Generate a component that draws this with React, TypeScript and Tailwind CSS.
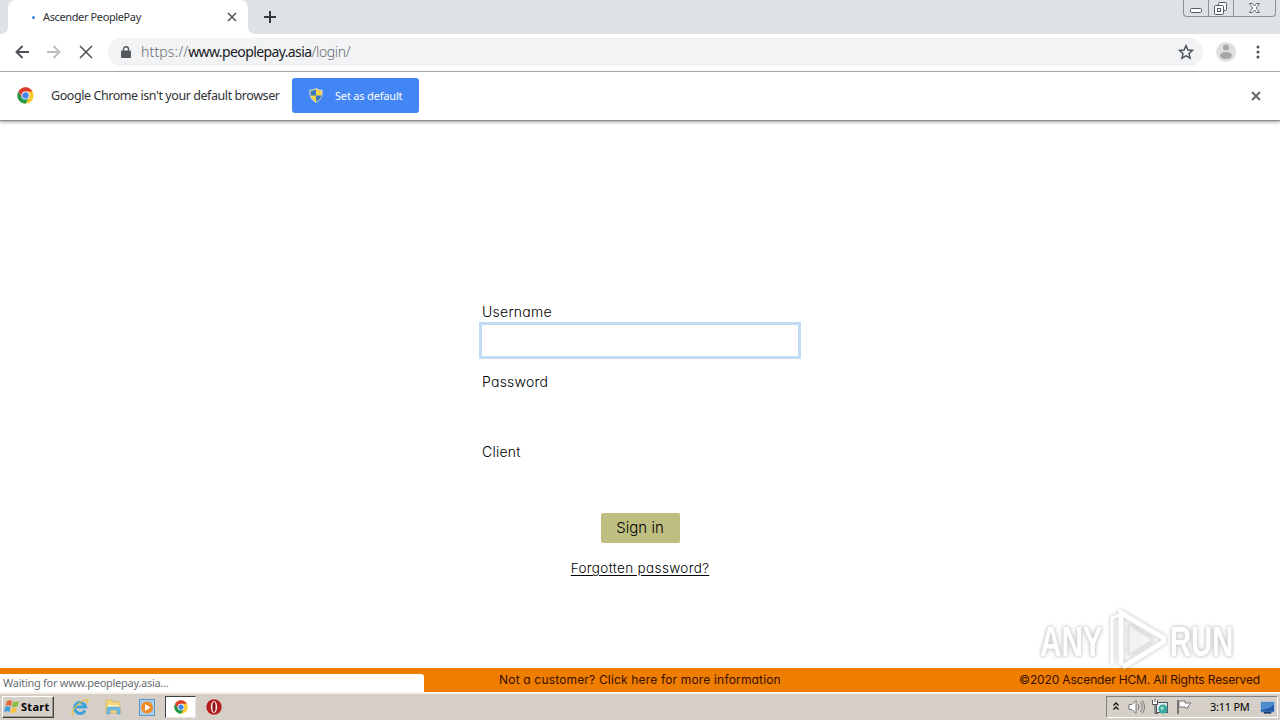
import React from "react";

const ui = "font-['Noto_Sans','Open_Sans',sans-serif]";
const geo = "font-['Inter',sans-serif] [font-feature-settings:'cv11']";

function ChromeLogo({ size }: { size: number }) {
  return (
    <svg width={size} height={size} viewBox="0 0 48 48" className="block shrink-0">
      <circle cx="24" cy="24" r="23" fill="#fbc92f" />
      <path d="M14 29.800 4.100 12.500A23 23 0 0 0 24 47L34 29.800Z" fill="#1f9b55" />
      <path d="M24 12.500H43.900A23 23 0 0 0 4.100 12.500L14 29.800 24 24Z" fill="#dc3b30" />
      <circle cx="24" cy="24" r="11.5" fill="#fff" />
      <circle cx="24" cy="24" r="9" fill="#4285e8" />
    </svg>
  );
}

function Cross({ size, color, width = 2 }: { size: number; color: string; width?: number }) {
  return (
    <svg width={size} height={size} viewBox={`0 0 ${size} ${size}`} className="block shrink-0">
      <path d={`M1 1L${size - 1} ${size - 1}M${size - 1} 1L1 ${size - 1}`} stroke={color} strokeWidth={width} fill="none" />
    </svg>
  );
}

function WindowButtons() {
  return (
    <div className="ml-auto mr-[4px] flex h-[17px] w-[93px] rounded-b-[4px] border border-t-0 border-[#8b9097]">
      <svg width="91" height="16" viewBox="0 0 91 16" fill="none" stroke="#555b65" className="block">
        <path d="M24.5 0V16M49.500 0V16" stroke="#8b9097" />
        <rect x="6.500" y="8.500" width="11" height="4" rx="1" fill="#fff" />
        <rect x="34.500" y="2.500" width="8" height="8" rx="1" fill="#fff" />
        <rect x="30.500" y="5.500" width="9" height="9" rx="1" fill="#fff" />
        <rect x="33.500" y="8.500" width="3" height="3" />
        <path d="M65.500 3.500h3l2 2.500 2-2.500h3l-3.200 4.500 3.200 4.500h-3l-2-2.500-2 2.500h-3l3.200-4.500z" fill="#fff" strokeWidth=".9" />
      </svg>
    </div>
  );
}

function TabStrip() {
  return (
    <div className="flex h-[34px] bg-[#dee1e6]">
      <svg width="8" height="34" className="block shrink-0"><path d="M0 34Q8 34 8 26V34Z" fill="#fff" /></svg>
      <div className="flex h-[34px] w-[240px] items-center rounded-t-[8px] bg-white pl-[24px] pr-[11px]">
        <span className="h-[3px] w-[3px] rounded-full bg-[#3b84df]" />
        <span className={`ml-[8px] whitespace-nowrap text-[11px] leading-[16px] tracking-[-0.38px] text-[#303236] ${ui}`}>Ascender PeoplePay</span>
        <span className="ml-auto"><Cross size={10} color="#55585c" width={1.6} /></span>
      </div>
      <svg width="8" height="34" className="block shrink-0"><path d="M8 34Q0 34 0 26V34Z" fill="#fff" /></svg>
      <svg width="12" height="12" viewBox="0 0 12 12" className="ml-[8px] mt-[11px] block"><path d="M6 0V12M0 6H12" stroke="#35383d" strokeWidth="2" /></svg>
      <WindowButtons />
    </div>
  );
}

function Toolbar() {
  return (
    <div className="flex h-[38px] items-center border-b border-[#b5b6b8] bg-white pb-px pl-[15px]">
      <svg width="14" height="14" viewBox="0 0 14 14" fill="none" stroke="#4c4f54" strokeWidth="1.9"><path d="M14 7H1.500M7.500 1 1.500 7l6 6" /></svg>
      <svg width="14" height="14" viewBox="0 0 14 14" fill="none" stroke="#bcbec1" strokeWidth="1.9" className="ml-[18px]"><path d="M0 7h12.500M6.500 1l6 6-6 6" /></svg>
      <span className="ml-[18px]"><Cross size={14} color="#505358" width={1.6} /></span>
      <div className="ml-[15px] flex h-[28px] w-[1095px] items-center rounded-full bg-[#f1f3f4] pl-[13px] pr-[10px]">
        <svg width="10" height="12" viewBox="0 0 10 12"><rect y="4.500" width="10" height="7.500" rx="1" fill="#55585d" /><path d="M2.500 5V3a2.500 2.200 0 0 1 5 0V5" fill="none" stroke="#55585d" strokeWidth="1.400" /></svg>
        <span className={`ml-[10px] whitespace-nowrap text-[14px] font-light leading-[20px] text-[#686c72] ${ui}`}>
          <span className="tracking-[0.15px]">https://</span><span className="font-normal tracking-[-0.6px] text-[#202124]">www.peoplepay.asia</span><span className="tracking-[-0.35px]">/login/</span>
        </span>
        <svg width="16" height="16" viewBox="0 0 16 16" className="ml-auto mr-[-1px]"><path d="M8 1.600 9.900 6l4.700.4L11 9.500l1.100 4.700L8 11.700l-4.100 2.500L5 9.500 1.400 6.400 6.100 6Z" fill="none" stroke="#4a4e55" strokeWidth="1.400" /></svg>
      </div>
      <svg width="20" height="20" viewBox="0 0 20 20" className="ml-[13px]"><circle cx="10" cy="10" r="10" fill="#dedfe0" /><circle cx="10" cy="5.500" r="3" fill="#a6a7a8" /><ellipse cx="10" cy="13.500" rx="6" ry="3.500" fill="#a6a7a8" /></svg>
      <svg width="4" height="14" viewBox="0 0 4 14" className="ml-[20px]" fill="#4e5156"><circle cx="2" cy="2" r="1.500" /><circle cx="2" cy="7" r="1.500" /><circle cx="2" cy="12" r="1.500" /></svg>
    </div>
  );
}

function Infobar() {
  return (
    <div className="flex h-[49px] items-center border-b border-[#8d8d8d] bg-white pb-px pl-[17px] pr-[19px] shadow-[0_1px_3px_rgba(0,0,0,0.4)]">
      <ChromeLogo size={17} />
      <span className={`ml-[17px] w-[241px] whitespace-nowrap text-[12.5px] leading-[18px] tracking-[-0.43px] text-[#303236] ${ui}`}>Google Chrome isn't your default browser</span>
      <button className={`flex h-[35px] w-[127px] items-center rounded-[3px] bg-[#4285f4] pl-[17px] text-[11px] leading-[16px] text-white ${ui}`}>
        <svg width="14" height="15" viewBox="0 0 14 15" className="shrink-0">
          <path d="M7 .5Q10 2.500 13.200 2.200Q14 11 7 14.500Q0 11 .8 2.200Q4 2.500 7 .5Z" fill="#f5d34e" stroke="#c7cfdc" />
          <path d="M7 1.500Q4 3 1.700 2.900L1.600 7.500H7Z M7 7.500H12.400Q11.500 11.500 7 13.600Z" fill="#347bc0" />
        </svg>
        <span className="ml-[12px] whitespace-nowrap tracking-[-0.18px]">Set as default</span>
      </button>
      <span className="ml-auto"><Cross size={10} color="#606368" width={2} /></span>
    </div>
  );
}

function Field({ label, focused = false }: { label: string; focused?: boolean }) {
  return (
    <label className="block h-[70px]">
      <span className="block h-[20px] pl-[3px] text-[14px] leading-[20px] tracking-[0.25px]">{label}</span>
      <input className={focused ? "block h-[37px] w-[322px] border-[3px] border-[#c3daf3] bg-white outline-none" : "block h-[37px] w-[322px] bg-transparent outline-none"} />
    </label>
  );
}

function Watermark() {
  return (
    <div className="absolute right-[38px] top-[608px] flex h-[66px] w-[202px] items-center opacity-90 drop-shadow-[0_0_2px_rgba(0,0,0,0.3)]">
      <span className="block w-[70px] whitespace-nowrap">
        <span className="inline-block origin-left scale-x-[.69] text-[43px] font-bold leading-[60px] text-white font-['Liberation_Sans',sans-serif] [text-shadow:0_0_2px_#ccc]">ANY</span>
      </span>
      <svg width="60" height="64" viewBox="0 0 60 64" fill="none" stroke="#fff" strokeWidth="5" className="-ml-[3px] mr-[3px] shrink-0">
        <path d="M5 55V9l8-3" strokeWidth="3" />
        <path d="M14 56V4L56 28.500Q58 32 55 34L16 58" />
        <path d="M22 16 46 31 22 46Z" fill="#f1f1f1" stroke="#e0e0e0" strokeWidth="1.500" />
      </svg>
      <span className="block w-[67px] whitespace-nowrap">
        <span className="inline-block origin-left scale-x-[.68] text-[43px] font-bold leading-[60px] text-white font-['Liberation_Sans',sans-serif] [text-shadow:0_0_2px_#ccc]">RUN</span>
      </span>
    </div>
  );
}

function Tray() {
  return (
    <div className={`ml-auto mr-[2px] flex h-[22px] w-[172px] items-center border border-b-white border-l-[#808080] border-r-white border-t-[#808080] pl-[6px] text-[11px] text-black ${ui}`}>
      <svg width="6" height="8" viewBox="0 0 6 8" fill="none" stroke="#111" strokeWidth="1.300" className="-mt-[3px]"><path d="M.5 3.500 3 1l2.500 2.500M.5 7.500 3 5l2.500 2.500" /></svg>
      <svg width="17" height="16" viewBox="0 0 17 16" className="ml-[9px]" fill="none" stroke="#777"><path d="M1 5.500h3L8 1.500v13L4 10.500H1Z" fill="#fff" /><path d="M10 5q2 3 0 6M12.500 3q3.500 5 0 10M14.500 1.500q4 6.500 0 13" /></svg>
      <svg width="17" height="16" viewBox="0 0 17 16" className="ml-[7px]"><rect x="4.500" y="3.500" width="11" height="10" fill="#e4eeee" stroke="#4b5660" /><path d="M.5 1v4.500h5V1M3 5v9.500h3" fill="none" stroke="#555" /><path d="M1 1h4v4H1Z" fill="#fff" /><path d="M3 0v3" stroke="#555" /><circle cx="11" cy="10" r="4.500" fill="#36a7a1" /><path d="M8 9l3-2 1 2-2 3Z" fill="#9bddc9" /></svg>
      <svg width="17" height="16" viewBox="0 0 17 16" className="ml-[7px]" stroke="#777" fill="#fff"><path d="M2 1V15" strokeWidth="2" fill="none" /><path d="M3 2h6v2h6l-3 3v2H9V8H3Z" /></svg>
      <span className="ml-[17px] w-[50px] whitespace-nowrap tracking-[-0.25px]">3:11 PM</span>
      <svg width="16" height="15" viewBox="0 0 17 15" className="shrink-0"><rect x=".5" y="1.500" width="15" height="11" fill="#215ba9" stroke="#b8cde4" /><path d="M1 10Q9 10 15 4V2H1Z" fill="#4c8cce" /><path d="M4 13h8" stroke="#153a67" strokeWidth="2" /></svg>
    </div>
  );
}

function Taskbar() {
  return (
    <div className="flex h-[28px] items-center border-t-2 border-[#f5f3ef] bg-[#d5cfc8] pl-[2px]">
      <button className={`flex h-[22px] w-[52px] items-center border border-b-[#404040] border-l-white border-r-[#404040] border-t-white pl-px text-[11px] font-bold leading-[16px] text-black shadow-[inset_-1px_-1px_#9b9892] ${ui}`}>
        <svg width="16" height="16" viewBox="0 0 16 16" className="shrink-0"><path d="M3 2q3-1.500 5 0L7 7Q4 5.500 1.500 7Z" fill="#e46436" /><path d="M9 2.500q3 1.500 6-.5l-1.500 5Q10.500 9 8 7.500Z" fill="#8abb43" /><path d="M1 8q3-1.500 5.500 0L5.500 13Q3 11.500 0 13Z" fill="#439ed5" /><path d="M7.500 8.500q3 1.500 5.500 0L11.500 13q-3 2-5 .5Z" fill="#f7c33a" /></svg>
        <span className="ml-px tracking-[0.3px]">Start</span>
      </button>
      <svg width="18" height="18" viewBox="0 0 18 18" className="ml-[17px]" fill="none"><path d="M14 12.500A5.500 5.500 0 1 1 14.500 9H5" stroke="#3ba4dc" strokeWidth="3" /><path d="M3 16Q-1 17 3 11T14 2Q19 0 16 5" stroke="#e8bc3d" strokeWidth="1.300" /></svg>
      <svg width="17" height="18" viewBox="0 0 17 18" className="ml-[16px]"><path d="M1 2h6l1 2h7v11H1Z" fill="#f3d77c" stroke="#d5af53" strokeWidth=".7" /><path d="M3 7h11v3H3Z" fill="#fff3bd" /><path d="M2 16v-5q0-2 2-2h9q2 0 2 2v5h-3v-4H5v4Z" fill="#72bce1" stroke="#4d9ecb" strokeWidth=".6" /></svg>
      <svg width="16" height="17" viewBox="0 0 16 17" className="ml-[17px]"><rect x=".5" y=".5" width="15" height="16" fill="#a9cdea" stroke="#5798c5" /><circle cx="8" cy="8.500" r="6" fill="#f28c22" /><path d="m6 5 5.500 3.500L6 12Z" fill="#fff" /></svg>
      <div className="ml-[10px] flex h-[22px] w-[31px] items-center justify-center border border-b-[#e8e5e0] border-l-[#404040] border-r-[#e8e5e0] border-t-[#404040] bg-white"><ChromeLogo size={14} /></div>
      <svg width="16" height="16" viewBox="0 0 16 16" className="ml-[10px]"><circle cx="8" cy="8" r="7.700" fill="#b51c20" /><ellipse cx="8" cy="8" rx="3.200" ry="6" fill="#f3e3e2" /><ellipse cx="8" cy="8" rx="1.500" ry="5" fill="#8d1015" /></svg>
      <Tray />
    </div>
  );
}

export default function App() {
  return (
    <div className="relative flex h-[720px] w-[1280px] flex-col overflow-hidden bg-white">
      <TabStrip />
      <Toolbar />
      <Infobar />
      <main className={`flex h-[547px] flex-col items-center pt-[181px] font-light text-black ${geo}`}>
        <form className="w-[322px]">
          <Field label="Username" focused />
          <Field label="Password" />
          <Field label="Client" />
        </form>
        <button className="mt-px h-[30px] w-[79px] rounded-[2px] bg-[#bdbe80] text-[15px] leading-[30px] tracking-[0.05px]">Sign in</button>
        <a className="mt-[15px] text-[13.5px] leading-[20px] tracking-[0.35px] underline underline-offset-2">Forgotten password?</a>
      </main>
      <footer className={`relative flex h-[24px] items-center justify-center bg-[#ef7d00] text-[12px] leading-[24px] text-[#351000] ${geo}`}>
        <span className="whitespace-nowrap tracking-[0.17px]">Not a customer? Click here for more information</span>
        <span className="absolute right-[20px] top-0 whitespace-nowrap tracking-[-0.15px]">©2020 Ascender HCM. All Rights Reserved</span>
        <span className={`absolute bottom-0 left-0 h-[18px] w-[424px] rounded-tr-[3px] bg-white pl-[3px] text-[11px] leading-[18px] tracking-[-0.27px] text-[#6b6e72] [font-feature-settings:normal] ${ui}`}>Waiting for www.peoplepay.asia...</span>
      </footer>
      <Taskbar />
      <Watermark />
    </div>
  );
}
